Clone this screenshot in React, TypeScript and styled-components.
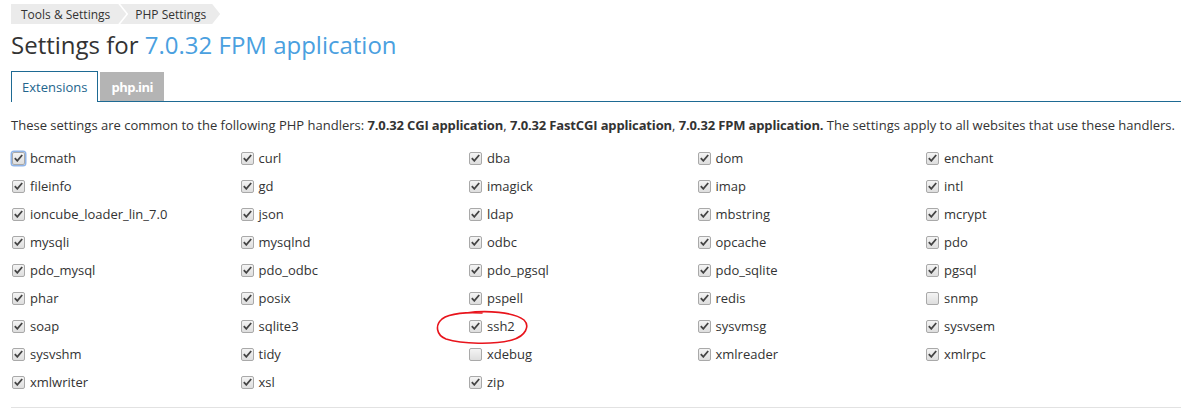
import styled, { createGlobalStyle } from "styled-components";

const GlobalStyle = createGlobalStyle`
  html, body {
    margin: 0;
    padding: 0;
    background: #fff;
  }
  body {
    font-family: "Open Sans", "Liberation Sans", sans-serif;
    color: #333;
    font-size: 13px;
  }
`;

const Page = styled.div`
  padding: 4px 0 0 11px;
`;

const Breadcrumbs = styled.nav`
  display: flex;
  height: 20px;
`;

const Crumb = styled.div<{ $first?: boolean }>`
  display: flex;
  align-items: center;
  height: 20px;
  background: #ebebeb;
  font-size: 12px;
  color: #333;
  padding: ${(p) => (p.$first ? "0 16px 0 10px" : "0 14px 0 15px")};
  margin-left: ${(p) => (p.$first ? "0" : "-6px")};
  clip-path: ${(p) =>
    p.$first
      ? "polygon(0 0, calc(100% - 8px) 0, 100% 50%, calc(100% - 8px) 100%, 0 100%)"
      : "polygon(0 0, calc(100% - 8px) 0, 100% 50%, calc(100% - 8px) 100%, 0 100%, 8px 50%)"};
`;

const Title = styled.h1`
  margin: 5px 0 0;
  font-size: 24px;
  line-height: 32px;
  font-weight: 400;
  color: #333;

  span {
    color: #4aa0df;
  }
`;

const TabBar = styled.div`
  display: flex;
  align-items: flex-end;
  margin-top: 9px;
  height: 31px;
  border-bottom: 1px solid #1e6a93;
`;

const Tab = styled.div<{ $active?: boolean }>`
  display: flex;
  align-items: center;
  padding: ${(p) => (p.$active ? "0 10px 1px" : "0 11px")};
  margin-right: 2px;
  font-size: 13px;
  background: ${(p) => (p.$active ? "#fff" : "#b4b4b4")};
  color: ${(p) => (p.$active ? "#23658d" : "#fff")};
  font-weight: ${(p) => (p.$active ? 400 : 700)};
  letter-spacing: ${(p) => (p.$active ? "0" : "-0.5px")};
  border: ${(p) => (p.$active ? "1px solid #1e6a93" : "none")};
  border-bottom: none;
  margin-bottom: ${(p) => (p.$active ? "-1px" : "0")};
  height: ${(p) => (p.$active ? "31px" : "29px")};
  box-sizing: border-box;
`;

const Description = styled.p`
  margin: 14px 0 0;
  font-size: 13px;
  line-height: 18px;
  white-space: nowrap;

  b {
    font-weight: 700;
    letter-spacing: -0.15px;
  }
`;

const Grid = styled.div`
  display: grid;
  grid-template-columns: repeat(5, 228.5px);
  grid-auto-rows: 28px;
  margin-top: 10px;
  padding-bottom: 11px;
  border-bottom: 1px solid #e2e2e2;
`;

const Item = styled.label`
  position: relative;
  display: flex;
  align-items: center;
  gap: 5px;
  font-size: 13px;
  color: #333;
`;

const Box = styled.span<{ $checked: boolean; $focused?: boolean }>`
  display: inline-flex;
  align-items: center;
  justify-content: center;
  width: 11px;
  height: 11px;
  margin-left: 1px;
  border: 1px solid #a9a9a9;
  border-radius: 2px;
  background: linear-gradient(#f4f4f4, #dedede);
  box-shadow: ${(p) => (p.$focused ? "0 0 0 1.5px #8fb4e8" : "none")};

  svg {
    display: ${(p) => (p.$checked ? "block" : "none")};
  }
`;

const Circle = styled.svg`
  position: absolute;
  left: -32px;
  top: -2px;
  overflow: visible;
  pointer-events: none;
`;

const extensions: [string, boolean][] = [
  ["bcmath", true], ["curl", true], ["dba", true], ["dom", true], ["enchant", true],
  ["fileinfo", true], ["gd", true], ["imagick", true], ["imap", true], ["intl", true],
  ["ioncube_loader_lin_7.0", true], ["json", true], ["ldap", true], ["mbstring", true], ["mcrypt", true],
  ["mysqli", true], ["mysqlnd", true], ["odbc", true], ["opcache", true], ["pdo", true],
  ["pdo_mysql", true], ["pdo_odbc", true], ["pdo_pgsql", true], ["pdo_sqlite", true], ["pgsql", true],
  ["phar", true], ["posix", true], ["pspell", true], ["redis", true], ["snmp", false],
  ["soap", true], ["sqlite3", true], ["ssh2", true], ["sysvmsg", true], ["sysvsem", true],
  ["sysvshm", true], ["tidy", true], ["xdebug", false], ["xmlreader", true], ["xmlrpc", true],
  ["xmlwriter", true], ["xsl", true], ["zip", true],
];

const Check = () => (
  <svg width="9" height="8" viewBox="0 0 9 8">
    <path d="M0.8 4.2 L3.3 6.8 L8.2 1" fill="none" stroke="#444" strokeWidth="1.8" />
  </svg>
);

const App = () => {
  return (
    <Page>
      <GlobalStyle />
      <Breadcrumbs>
        <Crumb $first>Tools &amp; Settings</Crumb>
        <Crumb>PHP Settings</Crumb>
      </Breadcrumbs>
      <Title>
        Settings for <span>7.0.32 FPM application</span>
      </Title>
      <TabBar>
        <Tab $active>Extensions</Tab>
        <Tab>php.ini</Tab>
      </TabBar>
      <Description>
        These settings are common to the following PHP handlers: <b>7.0.32 CGI application</b>,{" "}
        <b>7.0.32 FastCGI application</b>, <b>7.0.32 FPM application.</b> The settings apply to all
        websites that use these handlers.
      </Description>
      <Grid>
        {extensions.map(([name, checked], i) => (
          <Item key={name}>
            <Box $checked={checked} $focused={i === 0}>
              <Check />
            </Box>
            {name}
            {name === "ssh2" && (
              <Circle width="92" height="34" viewBox="0 0 92 34">
                <path
                  d="M30 3 C50 0, 78 2, 88 10 C94 16, 90 26, 76 30 C58 35, 26 34, 10 29 C0 25, -1 15, 6 9 C14 3, 32 2, 46 3"
                  fill="none"
                  stroke="#e8141c"
                  strokeWidth="1.6"
                  strokeLinecap="round"
                />
              </Circle>
            )}
          </Item>
        ))}
      </Grid>
    </Page>
  );
};

export default App;
